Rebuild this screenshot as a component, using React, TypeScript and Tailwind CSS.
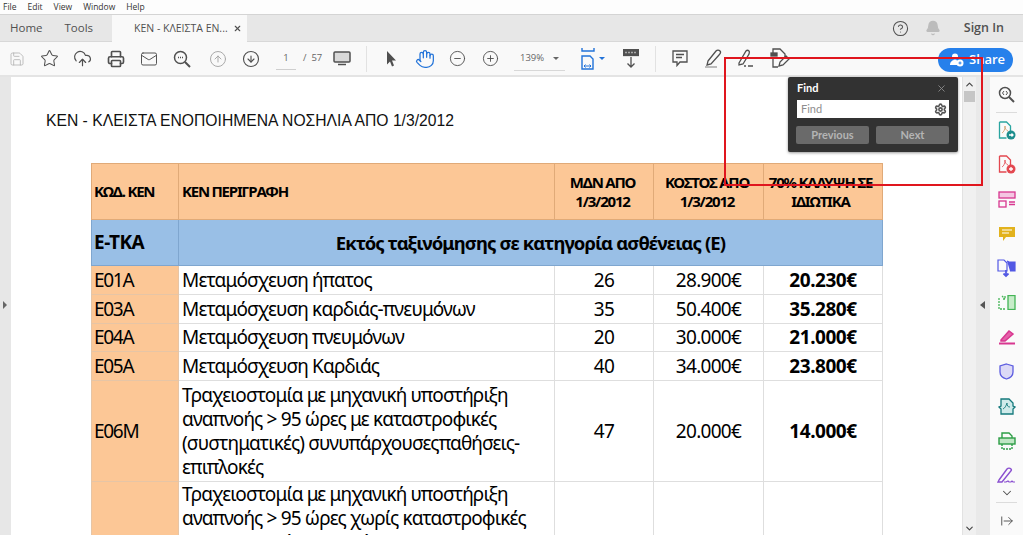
import React from "react";
import {
  Save, Star, CloudUpload, Printer, Mail, CircleArrowUp, CircleArrowDown, Hand,
  CircleMinus, CirclePlus, CircleHelp, Bell, X, Settings, ChevronUp, ChevronDown, ArrowRightFromLine,
} from "lucide-react";

const ui = "font-['Open_Sans','Noto_Sans',sans-serif]";
const doc = "font-['Noto_Sans','Open_Sans',sans-serif]";

function Sep() {
  return <div className="w-px h-[26px] bg-[#e2e2e2]" />;
}

function Tool({ w, children }: { w: string; children: React.ReactNode }) {
  return <div className={`${w} flex items-center justify-center shrink-0`}>{children}</div>;
}

function Toolbar() {
  return (
    <div className={`${ui} h-[35px] bg-[#f9f9f9] border-b-2 border-[#e4e4e4] flex items-center relative text-[#505050] shrink-0`}>
      <Tool w="w-[33px]"><Save size={16} strokeWidth={1.3} color="#b5b5b5" /></Tool>
      <Tool w="w-[33px]"><Star size={19} strokeWidth={1.3} /></Tool>
      <Tool w="w-[33px]"><CloudUpload size={19} strokeWidth={1.5} /></Tool>
      <Tool w="w-[33px]"><Printer size={18} strokeWidth={2.2} /></Tool>
      <Tool w="w-[33px]"><Mail size={18} strokeWidth={1.3} /></Tool>
      <Tool w="w-[34px]">
        <svg width="18" height="18" viewBox="0 0 18 18" fill="none" stroke="#505050" strokeWidth="1.5">
          <circle cx="7.5" cy="7.5" r="6" />
          <path d="M12 12l5 5" strokeWidth="2" />
          <path d="M5 7.5h1M7 7.5h1M9 7.5h1" />
        </svg>
      </Tool>
      <Tool w="w-[37px]"><CircleArrowUp size={18} strokeWidth={1.3} color="#a8a8a8" /></Tool>
      <Tool w="w-[30px]"><CircleArrowDown size={18} strokeWidth={1.5} /></Tool>
      <div className="w-[65px] flex items-center pl-[10px] text-[9.5px] text-[#666] shrink-0">
        <span className="w-[20px] border-b border-[#cfcfcf] text-center h-[22px] leading-[19px]">1</span>
        <span className="ml-[7px]">/&nbsp;&nbsp;57</span>
      </div>
      <Tool w="w-[22px]">
        <svg width="18" height="15" viewBox="0 0 18 15"><rect x="1" y="1" width="16" height="10" rx="1" fill="#d9d9d9" stroke="#505050" strokeWidth="1.5" /><path d="M5 13.5h8" stroke="#505050" strokeWidth="1.5" /></svg>
      </Tool>
      <div className="w-[14px] flex justify-end shrink-0"><Sep /></div>
      <Tool w="w-[48px]">
        <svg width="11" height="16" viewBox="0 0 11 16"><path d="M1 0l9 9.5H6l2 5-2 1-2-5-3 3z" fill="#505050" /></svg>
      </Tool>
      <Tool w="w-[20px]"><Hand size={20} strokeWidth={1.5} color="#2273d9" /></Tool>
      <Tool w="w-[44px]"><CircleMinus size={17} strokeWidth={1.3} /></Tool>
      <Tool w="w-[22px]"><CirclePlus size={17} strokeWidth={1.3} /></Tool>
      <div className="w-[51px] h-[24px] border-b border-[#d8d8d8] ml-[13px] flex items-center justify-between pl-[6px] pr-[6px] text-[9.5px] text-[#666] shrink-0">
        <span>139%</span>
        <span className="w-0 h-0 border-x-[3px] border-x-transparent border-t-[3px] border-t-[#666]" />
      </div>
      <div className="w-[42px] flex items-center pl-[16px] shrink-0">
        <svg width="26" height="22" viewBox="0 0 26 22" fill="none" stroke="#2273d9" strokeWidth="1.4">
          <path d="M1 0v3h12V0M1 21V8h8l3 3v10z" />
          <path d="M3 18h7M3 18l1.5-1.5M3 18l1.5 1.5M10 18l-1.5-1.5M10 18l-1.5 1.5" strokeWidth="1" />
          <path d="M18 9h6l-3 3z" fill="#2273d9" stroke="none" />
        </svg>
      </div>
      <Tool w="w-[48px]">
        <svg width="16" height="19" viewBox="0 0 16 19" fill="none" stroke="#505050" strokeWidth="1.3"><rect x="0.5" y="0.5" width="15" height="6" fill="#505050" /><path d="M8 8v10M4.5 14.5L8 18l3.5-3.5" /><path d="M2.5 3.5h1M5.5 3.5h1M8.5 3.5h1M11.5 3.5h1" stroke="#fff" /></svg>
      </Tool>
      <div className="w-[1px] shrink-0"><Sep /></div>
      <Tool w="w-[48px]">
        <svg width="16" height="17" viewBox="0 0 16 17" fill="none" stroke="#505050" strokeWidth="1.3"><path d="M1 1h14v11H8l-3 3.5V12H1z" /><path d="M4 4.5h8M4 7.5h6" /></svg>
      </Tool>
      <Tool w="w-[18px]">
        <svg className="shrink-0" width="18" height="19" viewBox="0 0 18 19" fill="none" stroke="#505050" strokeWidth="1.3"><path d="M4 12L12 2c1-1 3-1 4 0s0 3-1 4L7 15l-4 1z" /><path d="M1 18h12" stroke="#bbb" strokeWidth="2" /></svg>
      </Tool>
      <Tool w="w-[48px]">
        <svg width="18" height="19" viewBox="0 0 18 19" fill="none" stroke="#505050" strokeWidth="1.3"><path d="M2 14L9 2c1-1 2-1 3 0s0 2 0 3L6 15l-4 1zM7 17h2M11 17h5" /></svg>
      </Tool>
      <Tool w="w-[20px]">
        <svg className="shrink-0" width="20" height="21" viewBox="0 0 20 21" fill="none" stroke="#505050" strokeWidth="1.3"><path d="M3 5V1h7l5 5v3M3 9v10h5" /><rect x="1" y="5" width="6" height="3" fill="#505050" /><path d="M9 18l1-4 6-6 3 3-6 6z" /></svg>
      </Tool>
      <div className="absolute left-[938px] top-[6px] w-[75px] h-[24px] bg-[#2680eb] rounded-full flex items-center text-white text-[13px] font-semibold pl-[11px] gap-[5px]">
        <svg width="15" height="14" viewBox="0 0 15 14" fill="#fff"><circle cx="6" cy="3.5" r="3" /><path d="M1 12c0-3 2-5 5-5 1.5 0 2 .3 3 1v4z" /><circle cx="11" cy="10" r="3.5" /><path d="M11 8.5v3M9.5 10h3" stroke="#2680eb" /></svg>
        <span>Share</span>
      </div>
    </div>
  );
}

const rows = [
  ["E01A", "Μεταμόσχευση ήπατος", "26", "28.900€", "20.230€"],
  ["E03A", "Μεταμόσχευση καρδιάς-πνευμόνων", "35", "50.400€", "35.280€"],
  ["E04A", "Μεταμόσχευση πνευμόνων", "20", "30.000€", "21.000€"],
  ["E05A", "Μεταμόσχευση Καρδιάς", "40", "34.000€", "23.800€"],
];

const cell = "border border-[#dedede] text-center tracking-[-0.7px]";
const code = "bg-[#fcc796] border border-[#e6c5a6] pl-[2px] tracking-[-1.3px]";
const desc = "border border-[#dedede] pl-[3px] tracking-[-0.85px] whitespace-nowrap";
const head = "border border-[#e0aa78] font-bold text-[15px] leading-[19px] tracking-[-1.2px]";

function DocTable() {
  return (
    <table className={`${doc} table-fixed border-collapse w-[791px] mt-[32px] ml-[80px] text-black`}>
      <colgroup>
        <col className="w-[87px]" />
        <col className="w-[376px]" />
        <col className="w-[99px]" />
        <col className="w-[110px]" />
        <col className="w-[119px]" />
      </colgroup>
      <tbody>
        <tr className="h-[56px] bg-[#fcc796]">
          <td className={`${head} text-left pl-[2px]`}>ΚΩΔ. ΚΕΝ</td>
          <td className={`${head} text-left pl-[3px]`}>ΚΕΝ ΠΕΡΙΓΡΑΦΗ</td>
          <td className={`${head} text-center pr-[3px]`}>ΜΔΝ ΑΠΟ<br />1/3/2012</td>
          <td className={`${head} text-center pr-[3px]`}>ΚΟΣΤΟΣ ΑΠΟ<br />1/3/2012</td>
          <td className={`${head} text-center pr-[5px]`}>70% ΚΑΛΥΨΗ ΣΕ<br />ΙΔΙΩΤΙΚΑ</td>
        </tr>
        <tr className="h-[46px] bg-[#99bfe6]">
          <td className="border border-[#7fa6cf] font-bold text-[19px] pl-[2px] tracking-[-0.5px]">Ε-ΤΚΑ</td>
          <td colSpan={4} className="border border-[#7fa6cf] font-bold text-[18.5px] text-center tracking-[-0.9px]">Εκτός ταξινόμησης σε κατηγορία ασθένειας (Ε)</td>
        </tr>
        {rows.map((r) => (
          <tr key={r[0]} className="h-[28.75px] text-[19px] leading-[24px]">
            <td className={code}>{r[0]}</td>
            <td className={desc}>{r[1]}</td>
            <td className={cell}>{r[2]}</td>
            <td className={cell}>{r[3]}</td>
            <td className="border border-[#dedede] text-center font-bold tracking-[-0.45px]">{r[4]}</td>
          </tr>
        ))}
        <tr className="h-[101px] text-[19px] leading-[24px]">
          <td className={code}>Ε06Μ</td>
          <td className={desc}>
            Τραχειοστομία με μηχανική υποστήριξη<br />αναπνοής &gt; 95 ώρες με καταστροφικές<br />(συστηματικές) συνυπάρχουσεςπαθήσεις-<br />επιπλοκές
          </td>
          <td className={cell}>47</td>
          <td className={cell}>20.000€</td>
          <td className="border border-[#dedede] text-center font-bold tracking-[-0.45px]">14.000€</td>
        </tr>
        <tr className="h-[101px] text-[19px] leading-[24px] align-top">
          <td className={code} />
          <td className={desc}>
            Τραχειοστομία με μηχανική υποστήριξη<br />αναπνοής &gt; 95 ώρες χωρίς καταστροφικές<br />(συστηματικές) συνυπάρχουσες
          </td>
          <td className={cell} />
          <td className={cell} />
          <td className={cell} />
        </tr>
      </tbody>
    </table>
  );
}

function Side() {
  const S = ({ children }: { children: React.ReactNode }) => (
    <div className="h-[34.5px] flex items-center justify-center shrink-0">{children}</div>
  );
  return (
    <div className="w-[33px] bg-[#fafafa] flex flex-col items-center shrink-0">
      <div className="h-[35px] flex items-center justify-center shrink-0">
        <svg width="17" height="17" viewBox="0 0 17 17" fill="none" stroke="#505050" strokeWidth="1.5"><circle cx="7" cy="7" r="5.5" /><path d="M11 11l5 5" strokeWidth="2" /><path d="M6 5L4.5 7 6 9M8 5l1.5 2L8 9" strokeWidth="1" /></svg>
      </div>
      <div className="w-[21px] h-px bg-[#dcdcdc] shrink-0" />
      <S><svg width="18" height="19" viewBox="0 0 18 19" fill="none" stroke="#2aa5a0" strokeWidth="1.3"><path d="M1.5 1h7l4 4v5M1.5 1v16h7" /><path d="M4 12c2-1 3-4 3-7 0 3 1 4 3 5" stroke="#c96" strokeWidth=".8" /><circle cx="13" cy="14" r="4.5" fill="#1b8d8d" stroke="none" /><path d="M11 14h4M13.5 12.5L15 14l-1.5 1.5" stroke="#fff" /></svg></S>
      <S><svg width="18" height="19" viewBox="0 0 18 19" fill="none" stroke="#e34850" strokeWidth="1.3"><path d="M1.5 1h7l4 4v5M1.5 1v16h7" /><path d="M4 12c2-1 3-4 3-7 0 3 1 4 3 5" strokeWidth=".8" /><circle cx="13" cy="14" r="4.5" fill="#e34850" stroke="none" /><path d="M11 14h4M13 12v4" stroke="#fff" /></svg></S>
      <S><svg width="18" height="17" viewBox="0 0 18 17" fill="none" stroke="#d83790" strokeWidth="1.3"><rect x="1" y="1" width="16" height="6" fill="#f4c6e2" /><rect x="1" y="10" width="7" height="6" /><path d="M11 11h6M11 13.5h6" /></svg></S>
      <S><svg width="16" height="16" viewBox="0 0 16 16"><path d="M0 1h16v10H7l-3 4v-4H0z" fill="#e2b21d" /><path d="M3 4h10M3 7h7" stroke="#fff" strokeWidth="1.2" /></svg></S>
      <S><svg width="19" height="19" viewBox="0 0 19 19" fill="none" stroke="#5258e4" strokeWidth="1.2"><path d="M1 1h6l3 3v8H1z" /><path d="M10 2l2 1h6v9h-5" fill="#5258e4" /><path d="M9 11v6M6.5 14.5L9 17l2.5-2.5" strokeWidth="1.8" /></svg></S>
      <S><svg width="18" height="15" viewBox="0 0 18 15" fill="none" stroke="#44b556" strokeWidth="1.3"><rect x="10" y="0.5" width="7" height="14" fill="#c7ecc9" /><path d="M1 3v11h7M4 1l3 3M7 1v3H4" strokeDasharray="2 1" /></svg></S>
      <S><svg width="18" height="15" viewBox="0 0 18 15" fill="none" stroke="#d83790" strokeWidth="1.5"><path d="M3 10l8-9 4 3-8 7H3z" fill="#e561a9" /><path d="M1 13.5h16" strokeWidth="2" /></svg></S>
      <S><svg width="15" height="17" viewBox="0 0 15 17" fill="#dcd9f6" stroke="#5c5ce0" strokeWidth="1.3"><path d="M7.5 1L14 3v6c0 4-3 6-6.5 7C4 15 1 13 1 9V3z" /></svg></S>
      <S><svg width="18" height="17" viewBox="0 0 18 17" fill="none" stroke="#15797c" strokeWidth="1.3"><path d="M3 1h8l4 4v3l2 1-2 2v5H3v-5L1 9l2-1z" fill="#cfeaea" /><path d="M5 11c2-1 3-3 4-6 0 3 1 4 3 4" strokeWidth=".9" /></svg></S>
      <S><svg width="18" height="18" viewBox="0 0 18 18" fill="none" stroke="#2d9d46" strokeWidth="1.4"><path d="M4 6V1h7l3 3v2" /><rect x="1" y="6" width="16" height="6" fill="#bfe6c4" /><path d="M4 12v5h10v-5" strokeDasharray="2 1" /></svg></S>
      <S><svg width="19" height="17" viewBox="0 0 19 17" fill="none" stroke="#8a4fd0" strokeWidth="1.4"><path d="M2 13L10 2c1-1 3-1 4 0s0 2-1 3L5 15H1z" /><path d="M7 15h2l2-1 1 1h2l1-1 1 1h2" strokeWidth="1.2" /></svg></S>
      <ChevronDown className="mt-[-7px] shrink-0" size={14} strokeWidth={1.8} color="#505050" />
      <div className="w-[21px] h-px bg-[#dcdcdc] mt-[2px] shrink-0" />
      <ArrowRightFromLine className="mt-[11px] shrink-0" size={14} strokeWidth={1.6} color="#505050" />
    </div>
  );
}

export default function App() {
  return (
    <div className="h-[535px] w-[1023px] overflow-hidden relative bg-white flex flex-col">
      <div className={`${ui} h-[14px] bg-[#fdfdfd] flex items-center gap-[11px] pl-[3px] text-[8.5px] text-[#333] shrink-0`}>
        <span>File</span><span>Edit</span><span>View</span><span>Window</span><span>Help</span>
      </div>
      <div className={`${ui} h-[28px] shrink-0 bg-[#e7e7e7] border-t border-[#d4d4d4] border-b border-b-[#d8d8d8] flex items-stretch text-[11.5px] text-[#505050]`}>
        <div className="w-[112px] flex items-center pl-[10px] gap-[22px]"><span>Home</span><span>Tools</span></div>
        <div className="w-[135px] bg-[#f9f9f9] flex items-center pl-[22px] text-[10.5px] mb-[-1px] relative">
          <span className="whitespace-nowrap">ΚΕΝ - ΚΛΕΙΣΤΑ ΕΝ...</span>
          <X className="absolute left-[121px] top-[9px]" size={9} strokeWidth={3} />
        </div>
        <div className="flex-1" />
        <div className="flex items-center pr-[19px]">
          <CircleHelp size={17} strokeWidth={1.5} />
          <Bell className="ml-[16px]" size={16} fill="#bcbcbc" color="#bcbcbc" />
          <span className="ml-[23px] text-[12.5px] font-semibold">Sign In</span>
        </div>
      </div>
      <Toolbar />
      <div className="flex flex-1 min-h-0">
        <div className="w-[11px] bg-[#e7e7e7] flex items-center shrink-0">
          <span className="w-0 h-0 border-y-[4px] border-y-transparent border-l-[4px] border-l-[#666] ml-[3px] mt-[-3px]" />
        </div>
        <div className="flex-1 min-w-0 bg-white overflow-hidden">
          <div className="mt-[34px] ml-[35px] font-['Liberation_Sans',sans-serif] text-[15.7px] leading-[20px] text-[#111] whitespace-nowrap">ΚΕΝ - ΚΛΕΙΣΤΑ ΕΝΟΠΟΙΗΜΕΝΑ ΝΟΣΗΛΙΑ ΑΠΟ 1/3/2012</div>
          <DocTable />
        </div>
        <div className="w-[14px] bg-[#f0f0f0] border-l border-[#e2e2e2] flex flex-col items-center justify-between shrink-0">
          <div className="flex flex-col items-center">
            <ChevronUp className="mt-[2px]" size={11} strokeWidth={2.5} color="#444" />
            <div className="w-[11px] h-[11px] bg-[#c6c6c6] mt-[1px]" />
          </div>
          <ChevronDown className="mb-[1px]" size={11} strokeWidth={2.5} color="#444" />
        </div>
        <div className="w-[14px] bg-[#e9e9e9] flex items-center shrink-0">
          <span className="w-0 h-0 border-y-[4px] border-y-transparent border-r-[5px] border-r-[#555] ml-[4px] mt-[-3px]" />
        </div>
        <Side />
      </div>

      <div className="font-['Lato','Open_Sans',sans-serif] absolute left-[788px] top-[77px] w-[170px] h-[75px] bg-[#323232] rounded-[2px] shadow-[0_1px_3px_rgba(0,0,0,.4)] px-[9px]">
        <div className="h-[23px] flex items-center justify-between text-white text-[11px] font-bold">
          <span>Find</span>
          <X className="mr-[2px]" size={11} strokeWidth={2} color="#8a8a8a" />
        </div>
        <div className="h-[18px] bg-white flex items-center justify-between pl-[4px] pr-[2px] text-[11px] text-[#8e8e8e]">
          <span>Find</span>
          <Settings size={13} strokeWidth={3} color="#555" />
        </div>
        <div className="flex justify-between mt-[8px] ml-[-1px]">
          <div className="w-[73px] h-[18px] rounded-[2px] bg-[#6a6a6a] text-[#b4b4b4] text-[11px] font-bold flex items-center justify-center">Previous</div>
          <div className="w-[73px] h-[18px] rounded-[2px] bg-[#6a6a6a] text-[#b4b4b4] text-[11px] font-bold flex items-center justify-center">Next</div>
        </div>
      </div>
      <div className="absolute left-[724px] top-[57px] w-[259px] h-[129px] border-[2px] border-[#e0161e]" />
    </div>
  );
}
